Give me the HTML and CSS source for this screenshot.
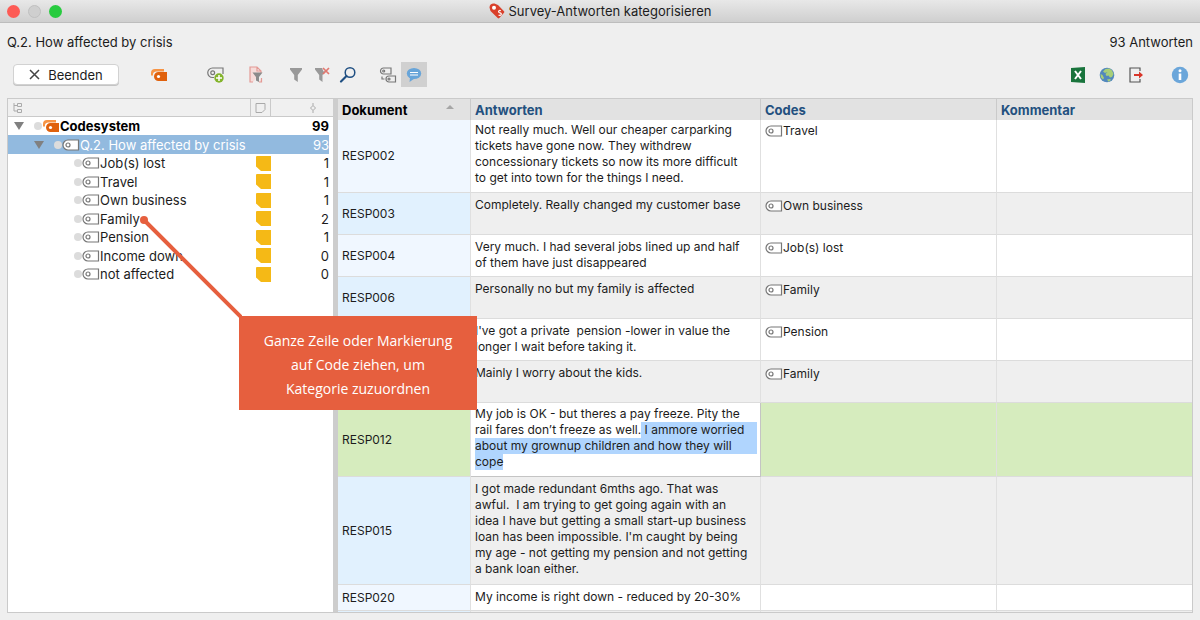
FILE: index.html
```html
<!DOCTYPE html>
<html lang="de">
<head>
    <meta charset="UTF-8">
    <meta name="viewport" content="width=device-width, initial-scale=1.0">
    <title>Survey-Antworten kategorisieren</title>
    <link rel="stylesheet" href="styles.css">
</head>
<body>
    <!-- shared icons -->
    <svg class="sprite" aria-hidden="true">
      <symbol id="code" viewBox="0 0 18 12">
        <path d="M6 1h10.500v10H6a5 5 0 0 1 0-10z" fill="#fff" stroke="#777" stroke-width="1.200"/>
        <circle cx="6" cy="6" r="2" fill="none" stroke="#777" stroke-width="1.200"/>
      </symbol>
      <symbol id="codes" viewBox="0 0 18 14">
        <path d="M1 7.500V5a4 4 0 0 1 4-4h9v2.500H6A3.500 3.500 0 0 0 3 7.500z" fill="#f79445"/>
        <path d="M8.500 4H17v9H8.500a4.500 4.500 0 0 1 0-9z" fill="#e0610c"/>
        <circle cx="8.500" cy="8.500" r="1.600" fill="#fff"/>
      </symbol>
      <symbol id="memo" viewBox="0 0 15 15">
        <path d="M1 0h14v15H5L0 10.500V1a1 1 0 0 1 1-1z" fill="#f5b916"/>
      </symbol>
    </svg>

    <header class="titlebar">
      <div class="controls">
        <button type="button" class="dot close" aria-label="Schließen"></button>
        <button type="button" class="dot minimize" aria-label="Minimieren"></button>
        <button type="button" class="dot maximize" aria-label="Maximieren"></button>
      </div>
      <h1>
        <svg width="16" height="16" viewBox="0 0 16 16" aria-hidden="true">
          <path d="M.5 4.500C.5 1.500 3 0 5.500.5L9 2l6 6.200q.8.800 0 1.600L10.300 15q-.8.800-1.600 0L1.500 8z" fill="#d9402b"/>
          <circle cx="5" cy="4.800" r="2" fill="#fff"/>
          <path d="M11.800 7.800c-1.200-1-2.800.2-2 1.400.6 1 2.200.5 2.500 1.700.2 1.200-1.600 2-2.700.9" fill="none" stroke="#fff" stroke-width="1.200"/>
        </svg>
        Survey-Antworten kategorisieren
      </h1>
    </header>

    <div class="question">
      <span>Q.2. How affected by crisis</span>
      <span>93 Antworten</span>
    </div>

    <div class="toolbar">
      <button type="button" class="quit">
        <svg width="11" height="11" viewBox="0 0 11 11" aria-hidden="true"><path d="M1 1l9 9M10 1l-9 9" stroke="#444" stroke-width="1.500"/></svg>
        Beenden
      </button>
      <div class="group first">
        <button type="button" class="tool" aria-label="Codes"><svg width="18" height="14"><use href="#codes"/></svg></button>
      </div>
      <div class="group">
        <button type="button" class="tool" aria-label="Neuer Code">
          <svg width="18" height="16" viewBox="0 0 18 16">
            <path d="M7 10.500H5.500a4.700 4.700 0 0 1 0-9.500H16v6" fill="none" stroke="#777" stroke-width="1.200"/>
            <circle cx="5.700" cy="5.700" r="1.900" fill="none" stroke="#777" stroke-width="1.200"/>
            <circle cx="12" cy="11" r="4.700" fill="#84b42c"/>
            <path d="M12 8v6M9 11h6" stroke="#fff" stroke-width="1.500"/>
          </svg>
        </button>
      </div>
      <div class="group">
        <button type="button" class="tool" aria-label="Filter zurücksetzen">
          <svg width="16" height="18" viewBox="0 0 16 18">
            <path d="M5 16H2V1h7l4 4v2M9 1v4h4M13.500 12v4H11" fill="#f6dcda" stroke="#e39a95" stroke-width="1.200"/>
            <path d="M4.500 6.500h10L11 11v5l-3-1.500V11z" fill="#8b8b8b"/>
          </svg>
        </button>
      </div>
      <div class="group">
        <button type="button" class="tool" aria-label="Filter">
          <svg width="14" height="16" viewBox="0 0 14 16"><path d="M1 1h12v1.500L8.800 8v7L5.200 12.500V8L1 2.500z" fill="#999"/></svg>
        </button>
        <button type="button" class="tool" aria-label="Filter entfernen">
          <svg width="16" height="16" viewBox="0 0 16 16">
            <path d="M1 1h7l1.500 3.500 2.500-.5-3.500 4v7L5.200 12.500V8L1 2.500z" fill="#999"/>
            <path d="M9 1l6 6M15 1L9 7" stroke="#e2776f" stroke-width="1.700"/>
          </svg>
        </button>
        <button type="button" class="tool" aria-label="Suchen">
          <svg width="18" height="18" viewBox="0 0 18 18"><circle cx="11" cy="6.500" r="4.800" fill="none" stroke="#1f4f82" stroke-width="1.500"/><path d="M7.500 10L2 15.500" stroke="#1f4f82" stroke-width="2.200" stroke-linecap="round"/></svg>
        </button>
      </div>
      <div class="group">
        <button type="button" class="tool" aria-label="Codes anzeigen">
          <svg width="18" height="16" viewBox="0 0 18 16" fill="none" stroke="#777" stroke-width="1.200">
            <path d="M4.500 1H12v6H4.500a3 3 0 0 1 0-6zM10 9h6.500v6H10a3 3 0 0 1 0-6zM3 9.500V12h2.500"/>
            <circle cx="4.700" cy="4" r="1"/><circle cx="10" cy="12" r="1"/>
          </svg>
        </button>
        <button type="button" class="tool active" aria-label="Kommentare">
          <svg width="16" height="16" viewBox="0 0 16 16"><ellipse cx="8" cy="6.500" rx="7.200" ry="5.500" fill="#68a5d9"/><path d="M4 10.500L3.500 15l5-3.500z" fill="#68a5d9"/><path d="M4 5.500h8M4 8h8" stroke="#fff" stroke-width="1.200"/></svg>
        </button>
      </div>
      <div class="group right">
        <button type="button" class="tool" aria-label="Excel-Export">
          <svg width="16" height="16" viewBox="0 0 16 16"><path d="M1 1l14-1v16L1 15z" fill="#19743c"/><path d="M5 4l6 8M11 4l-6 8" stroke="#fff" stroke-width="2"/></svg>
        </button>
        <button type="button" class="tool" aria-label="HTML-Export">
          <svg width="16" height="16" viewBox="0 0 16 16"><circle cx="8" cy="8" r="7.300" fill="#5288bd"/><path d="M4 4.500l2.500-2.500 4-.5L13 3.500l1.500 3.500-1.500 3-2 .5-1.500-2-2 .5-1-2L8.500 5 6 6zM1.500 7l2 1 1.500 3-1 1.500-2-2zM8 12.500l3-.5 1 1-2.500 1.700z" fill="#a8cf78"/></svg>
        </button>
        <button type="button" class="tool" aria-label="Exportieren">
          <svg width="16" height="16" viewBox="0 0 16 16"><path d="M12 4V1H2v14h10v-3" fill="none" stroke="#555" stroke-width="1.200"/><path d="M6 7h5V4.500L15 8l-4 3.500V9H6z" fill="#d8352a"/></svg>
        </button>
      </div>
      <div class="group info">
        <button type="button" class="tool" aria-label="Hilfe">
          <svg width="18" height="18" viewBox="0 0 18 18"><circle cx="9" cy="9" r="8.200" fill="#6ba6da"/><path d="M9 7.500V14" stroke="#fff" stroke-width="2.600"/><circle cx="9" cy="4.800" r="1.500" fill="#fff"/></svg>
        </button>
      </div>
    </div>

    <main class="panes">
      <section class="pane codes">
        <table class="tree">
          <thead>
            <tr>
              <th class="name" aria-label="Code">
                <svg width="10" height="10" viewBox="0 0 10 10" fill="none" stroke="#aaa"><path d="M1 0v8h3M1 2.500h3M4.500.5h4v3h-4zM4.500 6.500h4v3h-4z"/></svg>
              </th>
              <th class="note" aria-label="Memo">
                <svg width="11" height="10" viewBox="0 0 11 10" fill="none" stroke="#aaa"><path d="M1 .5h9v6L7 9.500H1z"/></svg>
              </th>
              <th class="count" aria-label="Anzahl">
                <svg width="8" height="10" viewBox="0 0 8 10" fill="none" stroke="#aaa"><path d="M4 0v2.500M4 7.500V10M4 2.500L6.500 5 4 7.500 1.500 5z"/></svg>
              </th>
            </tr>
          </thead>
          <tbody>
            <tr class="root">
              <td><div class="node"><i class="arrow"></i><i class="bullet"></i><svg width="18" height="14"><use href="#codes"/></svg>Codesystem</div></td>
              <td></td>
              <td class="num">99</td>
            </tr>
            <tr class="selected">
              <td><div class="node level1"><i class="arrow"></i><i class="bullet"></i><svg width="18" height="12"><use href="#code"/></svg>Q.2. How affected by crisis</div></td>
              <td></td>
              <td class="num">93</td>
            </tr>
            <tr>
              <td><div class="node level2"><i class="bullet"></i><svg width="18" height="12"><use href="#code"/></svg>Job(s) lost</div></td>
              <td class="memo"><svg width="15" height="15"><use href="#memo"/></svg></td>
              <td class="num">1</td>
            </tr>
            <tr>
              <td><div class="node level2"><i class="bullet"></i><svg width="18" height="12"><use href="#code"/></svg>Travel</div></td>
              <td class="memo"><svg width="15" height="15"><use href="#memo"/></svg></td>
              <td class="num">1</td>
            </tr>
            <tr>
              <td><div class="node level2"><i class="bullet"></i><svg width="18" height="12"><use href="#code"/></svg>Own business</div></td>
              <td class="memo"><svg width="15" height="15"><use href="#memo"/></svg></td>
              <td class="num">1</td>
            </tr>
            <tr>
              <td><div class="node level2"><i class="bullet"></i><svg width="18" height="12"><use href="#code"/></svg>Family</div></td>
              <td class="memo"><svg width="15" height="15"><use href="#memo"/></svg></td>
              <td class="num">2</td>
            </tr>
            <tr>
              <td><div class="node level2"><i class="bullet"></i><svg width="18" height="12"><use href="#code"/></svg>Pension</div></td>
              <td class="memo"><svg width="15" height="15"><use href="#memo"/></svg></td>
              <td class="num">1</td>
            </tr>
            <tr>
              <td><div class="node level2"><i class="bullet"></i><svg width="18" height="12"><use href="#code"/></svg>Income down</div></td>
              <td class="memo"><svg width="15" height="15"><use href="#memo"/></svg></td>
              <td class="num">0</td>
            </tr>
            <tr>
              <td><div class="node level2"><i class="bullet"></i><svg width="18" height="12"><use href="#code"/></svg>not affected</div></td>
              <td class="memo"><svg width="15" height="15"><use href="#memo"/></svg></td>
              <td class="num">0</td>
            </tr>
          </tbody>
        </table>
      </section>

      <section class="pane answers">
        <table class="grid">
          <thead>
            <tr>
              <th class="doc sorted">Dokument</th>
              <th class="answer">Antworten</th>
              <th class="code">Codes</th>
              <th>Kommentar</th>
            </tr>
          </thead>
          <tbody>
            <tr class="top">
              <td class="doc">RESP002</td>
              <td>Not really much. Well our cheaper carparking tickets have gone now. They withdrew concessionary tickets so now its more difficult to get into town for the things I need.</td>
              <td><div class="tag"><svg width="18" height="12"><use href="#code"/></svg>Travel</div></td>
              <td></td>
            </tr>
            <tr>
              <td class="doc">RESP003</td>
              <td>Completely. Really changed my customer base</td>
              <td><div class="tag"><svg width="18" height="12"><use href="#code"/></svg>Own business</div></td>
              <td></td>
            </tr>
            <tr>
              <td class="doc">RESP004</td>
              <td>Very much. I had several jobs lined up and half of them have just disappeared</td>
              <td><div class="tag"><svg width="18" height="12"><use href="#code"/></svg>Job(s) lost</div></td>
              <td></td>
            </tr>
            <tr>
              <td class="doc">RESP006</td>
              <td>Personally no but my family is affected</td>
              <td><div class="tag"><svg width="18" height="12"><use href="#code"/></svg>Family</div></td>
              <td></td>
            </tr>
            <tr>
              <td class="doc"></td>
              <td>I've got a private &nbsp;pension -lower in value the longer I wait before taking it.</td>
              <td><div class="tag"><svg width="18" height="12"><use href="#code"/></svg>Pension</div></td>
              <td></td>
            </tr>
            <tr>
              <td class="doc"></td>
              <td>Mainly I worry about the kids.</td>
              <td><div class="tag"><svg width="18" height="12"><use href="#code"/></svg>Family</div></td>
              <td></td>
            </tr>
            <tr class="current">
              <td class="doc">RESP012</td>
              <td class="editing">
                <div class="line">My job is OK - but theres a pay freeze. Pity the</div>
                <div class="line">rail fares don’t freeze as well.<mark class="fill"> I ammore worried</mark></div>
                <div class="line"><mark class="fill">about my grownup children and how they will</mark></div>
                <div class="line"><mark>cope</mark></div>
              </td>
              <td></td>
              <td></td>
            </tr>
            <tr class="long">
              <td class="doc">RESP015</td>
              <td>I got made redundant 6mths ago. That was awful. &nbsp;I am trying to get going again with an idea I have but getting a small start-up business loan has been impossible. I'm caught by being my age - not getting my pension and not getting a bank loan either.</td>
              <td></td>
              <td></td>
            </tr>
            <tr class="short">
              <td class="doc">RESP020</td>
              <td>My income is right down - reduced by 20-30%</td>
              <td></td>
              <td></td>
            </tr>
            <tr>
              <td class="doc"></td>
              <td></td>
              <td></td>
              <td></td>
            </tr>
          </tbody>
        </table>
      </section>
    </main>

    <svg class="pointer" width="102" height="102" viewBox="0 0 102 102" aria-hidden="true">
      <path d="M4 4l97 97" stroke="#e65f3e" stroke-width="4"/>
      <circle cx="4" cy="4" r="4" fill="#e65f3e"/>
    </svg>
    <div class="callout">Ganze Zeile oder Markierung auf Code ziehen, um Kategorie zuzuordnen</div>
</body>
</html>
```

FILE: styles.css
```css
* {
  margin: 0;
  padding: 0;
  box-sizing: border-box;
}
body {
  position: relative;
  display: flex;
  flex-direction: column;
  height: 100vh;
  overflow: hidden;
  font-family: Inter, "Liberation Sans", sans-serif;
  font-size: 13px;
  color: #1c1c1c;
  background-color: #efefef;
}
button {
  border: none;
  background: none;
  font: inherit;
  color: inherit;
}
svg {
  flex: none;
}
.sprite {
  position: absolute;
  width: 0;
  height: 0;
}
.titlebar {
  display: flex;
  align-items: center;
  height: 23px;
  padding: 0 7px;
  background: linear-gradient(#e8e8e8, #cfcfcf);
  border-bottom: 1px solid #bdbdbd;
}
.controls {
  display: flex;
  flex: 1;
  gap: 8px;
}
.dot {
  width: 13px;
  height: 13px;
  border-radius: 50%;
}
.close {
  background-color: #fd5b55;
}
.minimize {
  background-color: #cfcfcf;
  border: 1px solid #c0c0c0;
}
.maximize {
  background-color: #28cb3f;
}
.titlebar h1 {
  display: flex;
  align-items: center;
  gap: 4px;
  font-size: 13px;
  font-weight: 400;
}
.titlebar:after {
  content: "";
  flex: 1;
}
.question {
  display: flex;
  justify-content: space-between;
  padding: 11px 7px 0;
  line-height: 17px;
}
.toolbar {
  display: flex;
  align-items: center;
  gap: 14px;
  padding: 11px 7px 11px 13px;
}
.quit {
  display: flex;
  align-items: center;
  justify-content: center;
  gap: 8px;
  width: 106px;
  height: 21px;
  background-color: #fff;
  border: 1px solid #d2d2d2;
  border-radius: 4px;
  box-shadow: 0 1px 0 #c4c4c4;
}
.group {
  display: flex;
}
.first {
  margin: 0 17px 0 13px;
}
.right {
  gap: 3px;
  margin-left: auto;
}
.info {
  margin-left: 4px;
}
.tool {
  display: flex;
  align-items: center;
  justify-content: center;
  width: 26px;
  height: 25px;
}
.active {
  background-color: #d0d0d0;
}
.panes {
  display: flex;
  flex: 1;
  min-height: 0;
  margin: 0 7px 7px;
  border: 1px solid #cacaca;
}
.pane {
  overflow: hidden;
  background-color: #fff;
}
.codes {
  width: 330px;
  flex: none;
  border-right: 5px solid #cdcdcd;
}
.answers {
  flex: 1;
}
table {
  width: 100%;
  table-layout: fixed;
  border-collapse: separate;
  border-spacing: 0;
}
.tree th {
  height: 18px;
  padding-left: 5px;
  line-height: 0;
  text-align: left;
  background-color: #f0f0f0;
  border-bottom: 1px solid #cacaca;
}
.tree .note {
  width: 21px;
  padding-left: 4px;
  border-left: 1px solid #cacaca;
  border-right: 1px solid #cacaca;
}
.tree .count {
  width: 62px;
  padding-left: 38px;
}
.tree td {
  height: 18px;
  line-height: 16px;
}
.tree tr:nth-child(even) td {
  height: 19px;
}
.node {
  display: flex;
  align-items: center;
  padding-left: 6px;
  white-space: nowrap;
}
.level1 {
  padding-left: 26px;
}
.level2 {
  padding-left: 66px;
}
.arrow {
  margin-right: 10px;
  border: 5px solid transparent;
  border-top: 8px solid #808080;
  border-bottom: 0;
}
.bullet {
  width: 8px;
  height: 8px;
  border-radius: 50%;
  background-color: #dcdcdc;
}
.root {
  font-weight: 700;
  color: #000;
}
.selected td {
  color: #fff;
  background-color: #92badf;
}
.memo {
  padding-left: 6px;
  line-height: 0;
}
.memo svg {
  display: block;
}
.tree .num {
  text-align: right;
  border-right: 4px solid #fff;
}
.grid {
  font-size: 12px;
  line-height: 16px;
}
.grid th {
  height: 21px;
  padding: 0 4px;
  font-size: 13px;
  text-align: left;
  color: #23507f;
  background-color: #e2e2e2;
  border-right: 1px solid #cacaca;
}
.grid .doc {
  width: 133px;
}
.grid .answer {
  width: 290px;
}
.grid .code {
  width: 236px;
}
.grid .sorted {
  color: #000;
}
.sorted:after {
  content: "";
  float: right;
  margin: 3px 12px 0 0;
  border: 4px solid transparent;
  border-top: 0;
  border-bottom: 4px solid #a6a6a6;
}
.grid td {
  height: 42px;
  padding: 4px 9px 3px 4px;
  vertical-align: top;
  border-right: 1px solid #e0e0e0;
  border-bottom: 1px solid #dcdcdc;
}
.grid th:last-child,
.grid td:last-child {
  border-right: none;
}
.grid tr:nth-child(even) td {
  background-color: #efefef;
}
.grid td.doc {
  vertical-align: middle;
  background-color: #f0f7ff;
}
.grid tr:nth-child(even) td.doc {
  background-color: #e1f1fe;
}
.grid .top td {
  height: 73px;
  padding-top: 2px;
}
.grid .current td,
.grid .current td.doc {
  height: 74px;
  background-color: #d6ecbe;
}
.grid .current .editing {
  padding: 3px 3px 3px 4px;
  background-color: #fff;
  border-color: #c4c4c4;
}
.grid .long td {
  height: 108px;
}
.grid .short td {
  height: 26px;
}
.line {
  display: flex;
  white-space: pre;
}
mark {
  color: inherit;
  background-color: #b0d5fe;
}
.fill {
  flex: 1;
}
.tag {
  display: flex;
  align-items: center;
  padding-top: 1px;
}
.pointer {
  position: absolute;
  left: 140px;
  top: 216px;
}
.callout {
  position: absolute;
  left: 239px;
  top: 316px;
  width: 238px;
  padding: 13px 20px 9px;
  font-family: "Open Sans", sans-serif;
  font-size: 14px;
  line-height: 24px;
  text-align: center;
  color: #fff;
  background-color: #e65f3e;
}
```
